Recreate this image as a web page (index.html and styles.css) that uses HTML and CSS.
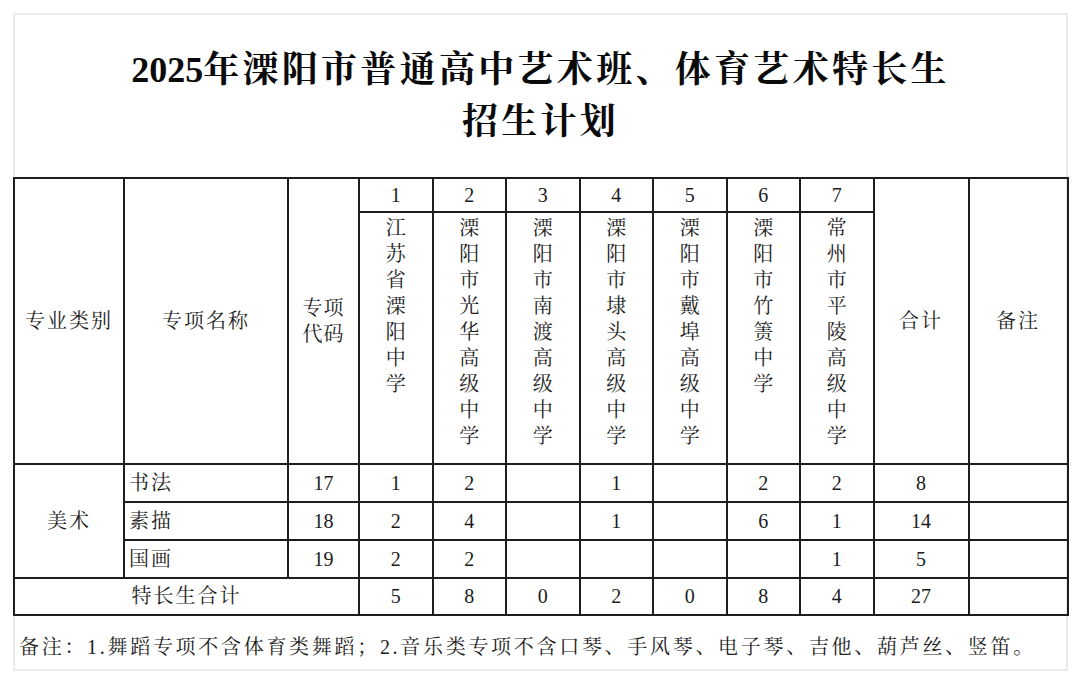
FILE: index.html
```html
<!DOCTYPE html>
<html lang="zh-CN">
<head>
<meta charset="utf-8">
<title>2025年溧阳市普通高中艺术班、体育艺术特长生招生计划</title>
<link rel="stylesheet" href="styles.css">
</head>
<body>
<div class="sheet">
  <h1 class="title"><span class="yr">2025</span>年溧阳市普通高中艺术班、体育艺术特长生<br>招生计划</h1>
  <table class="plan">
    <colgroup>
      <col class="c-cat"><col class="c-name"><col class="c-code">
      <col class="c-s"><col class="c-s"><col class="c-s"><col class="c-s"><col class="c-s"><col class="c-s"><col class="c-s">
      <col class="c-sum"><col class="c-note">
    </colgroup>
    <thead>
      <tr class="r-num">
        <th rowspan="2" class="hd">专业类别</th>
        <th rowspan="2" class="hd">专项名称</th>
        <th rowspan="2" class="hd hd-code">专项<br>代码</th>
        <th class="num">1</th><th class="num">2</th><th class="num">3</th><th class="num">4</th><th class="num">5</th><th class="num">6</th><th class="num">7</th>
        <th rowspan="2" class="hd">合计</th>
        <th rowspan="2" class="hd">备注</th>
      </tr>
      <tr class="r-school">
        <th class="school"><div class="vt">江苏省溧阳中学</div></th>
        <th class="school"><div class="vt">溧阳市光华高级中学</div></th>
        <th class="school"><div class="vt">溧阳市南渡高级中学</div></th>
        <th class="school"><div class="vt">溧阳市埭头高级中学</div></th>
        <th class="school"><div class="vt">溧阳市戴埠高级中学</div></th>
        <th class="school"><div class="vt">溧阳市竹箦中学</div></th>
        <th class="school"><div class="vt">常州市平陵高级中学</div></th>
      </tr>
    </thead>
    <tbody>
      <tr class="r1">
        <td rowspan="3" class="cat">美术</td>
        <td class="item">书法</td><td>17</td>
        <td>1</td><td>2</td><td></td><td>1</td><td></td><td>2</td><td>2</td>
        <td>8</td><td></td>
      </tr>
      <tr class="r2">
        <td class="item">素描</td><td>18</td>
        <td>2</td><td>4</td><td></td><td>1</td><td></td><td>6</td><td>1</td>
        <td>14</td><td></td>
      </tr>
      <tr class="r3">
        <td class="item">国画</td><td>19</td>
        <td>2</td><td>2</td><td></td><td></td><td></td><td></td><td>1</td>
        <td>5</td><td></td>
      </tr>
      <tr class="r4">
        <td colspan="3" class="total">特长生合计</td>
        <td>5</td><td>8</td><td>0</td><td>2</td><td>0</td><td>8</td><td>4</td>
        <td>27</td><td></td>
      </tr>
    </tbody>
  </table>
  <p class="note">备注：1.舞蹈专项不含体育类舞蹈；2.音乐类专项不含口琴、手风琴、电子琴、吉他、葫芦丝、竖笛。</p>
</div>
</body>
</html>
```
FILE: styles.css
```css
html, body {
  margin: 0;
  padding: 0;
  background: #ffffff;
}

body {
  font-family: "Liberation Serif", "Noto Serif CJK SC", "Noto Sans CJK SC", serif;
  color: #1c1c1c;
}

.sheet {
  box-sizing: border-box;
  width: 1055px;
  height: 658px;
  margin: 13px 0 0 13px;
  border: 2px solid #ebebeb;
  background: #ffffff;
}

.title {
  margin: 0;
  padding: 29px 0 29px;
  font-size: 36px;
  line-height: 52px;
  font-weight: 700;
  text-align: center;
  letter-spacing: 3.3px;
  color: #0a0a0a;
}

.title .yr {
  letter-spacing: 0;
}

.plan {
  border-collapse: collapse;
  table-layout: fixed;
  width: 1055px;
  margin-left: -2px;
  font-size: 20px;
}

.c-cat { width: 110px; }
.c-name { width: 164px; }
.c-code { width: 71px; }
.c-s { width: 73.5px; }
.c-sum { width: 95px; }
.c-note { width: 99px; }

.plan th,
.plan td {
  border: 2px solid #1e1e1e;
  padding: 0;
  font-weight: 400;
  text-align: center;
  vertical-align: middle;
  line-height: 26px;
}

.plan .hd {
  letter-spacing: 2px;
}

.plan .hd-code {
  letter-spacing: 1px;
}

.r-num th.num {
  height: 32px;
}

.r-school th {
  height: 250px;
}

.plan .school {
  vertical-align: top;
}

.vt {
  width: 20px;
  margin: 2px auto 0;
  line-height: 26px;
  word-break: break-all;
}

.r1 td, .r2 td { height: 36px; }
.r3 td, .r4 td { height: 35.5px; }

.plan .item {
  text-align: left;
  padding-left: 4px;
  letter-spacing: 2px;
}

.plan .cat,
.plan .total {
  letter-spacing: 2px;
}

.note {
  margin: 0;
  height: 56px;
  display: flex;
  align-items: center;
  padding: 2px 0 0 4px;
  box-sizing: border-box;
  font-size: 20px;
  letter-spacing: 2.7px;
  white-space: nowrap;
}
```
